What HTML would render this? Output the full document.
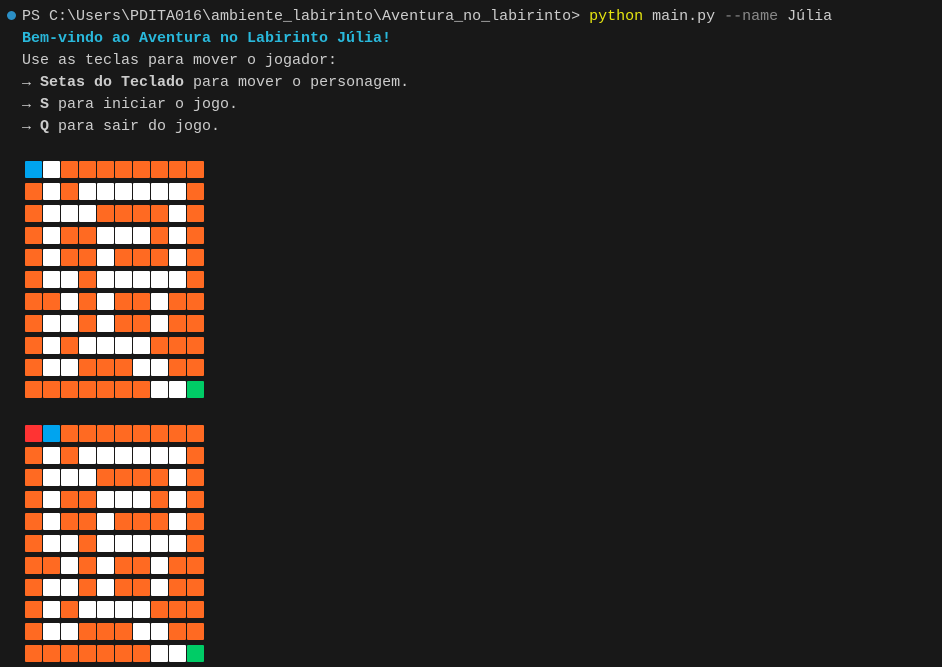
<!DOCTYPE html>
<html><head><meta charset="utf-8"><style>
html,body{margin:0;padding:0;background:#181818;width:942px;height:667px;overflow:hidden}
.t{position:absolute;left:22px;font-family:"Liberation Mono",monospace;font-size:15px;line-height:22px;color:#cccccc;white-space:pre}
.b{font-weight:bold}
.c{color:#29b8db}
.y{color:#e5e510}
.g{color:#8a8a8a}
.dot{position:absolute;left:7px;top:11px;width:9px;height:9px;border-radius:50%;background:#2b8fc6}
.cell{position:absolute;width:17px;height:17px;border-radius:1px}
.O{background:#ff6a22}.W{background:#ffffff}.B{background:#00a4ef}.G{background:#00cc66}.R{background:#ff3333}
</style></head><body>
<div class="dot"></div>
<div class="t" style="top:6px">PS C:\Users\PDITA016\ambiente_labirinto\Aventura_no_labirinto&gt; <span class="y">python</span> main.py <span class="g">--name</span> Júlia</div>
<div class="t b c" style="top:28px">Bem-vindo ao Aventura no Labirinto Júlia!</div>
<div class="t" style="top:50px">Use as teclas para mover o jogador:</div>
<div class="t" style="top:72px">→ <span class="b">Setas do Teclado</span> para mover o personagem.</div>
<div class="t" style="top:94px">→ <span class="b">S</span> para iniciar o jogo.</div>
<div class="t" style="top:116px">→ <span class="b">Q</span> para sair do jogo.</div>
<div id="g"></div>
<script>
var rows=["BWOOOOOOOO","OWOWWWWWWO","OWWWOOOOWO","OWOOWWWOWO","OWOOWOOOWO","OWWOWWWWWO","OOWOWOOWOO","OWWOWOOWOO","OWOWWWWOOO","OWWOOOWWOO","OOOOOOOWWG"];
var h="";
function grid(top,first){for(var r=0;r<11;r++){var s=r==0?first:rows[r];for(var c=0;c<10;c++){h+='<div class="cell '+s[c]+'" style="left:'+(25+c*18)+'px;top:'+(top+r*22)+'px"></div>';}}}
grid(161,rows[0]);grid(425,"RBOOOOOOOO");
document.getElementById("g").innerHTML=h;
</script>
</body></html>
